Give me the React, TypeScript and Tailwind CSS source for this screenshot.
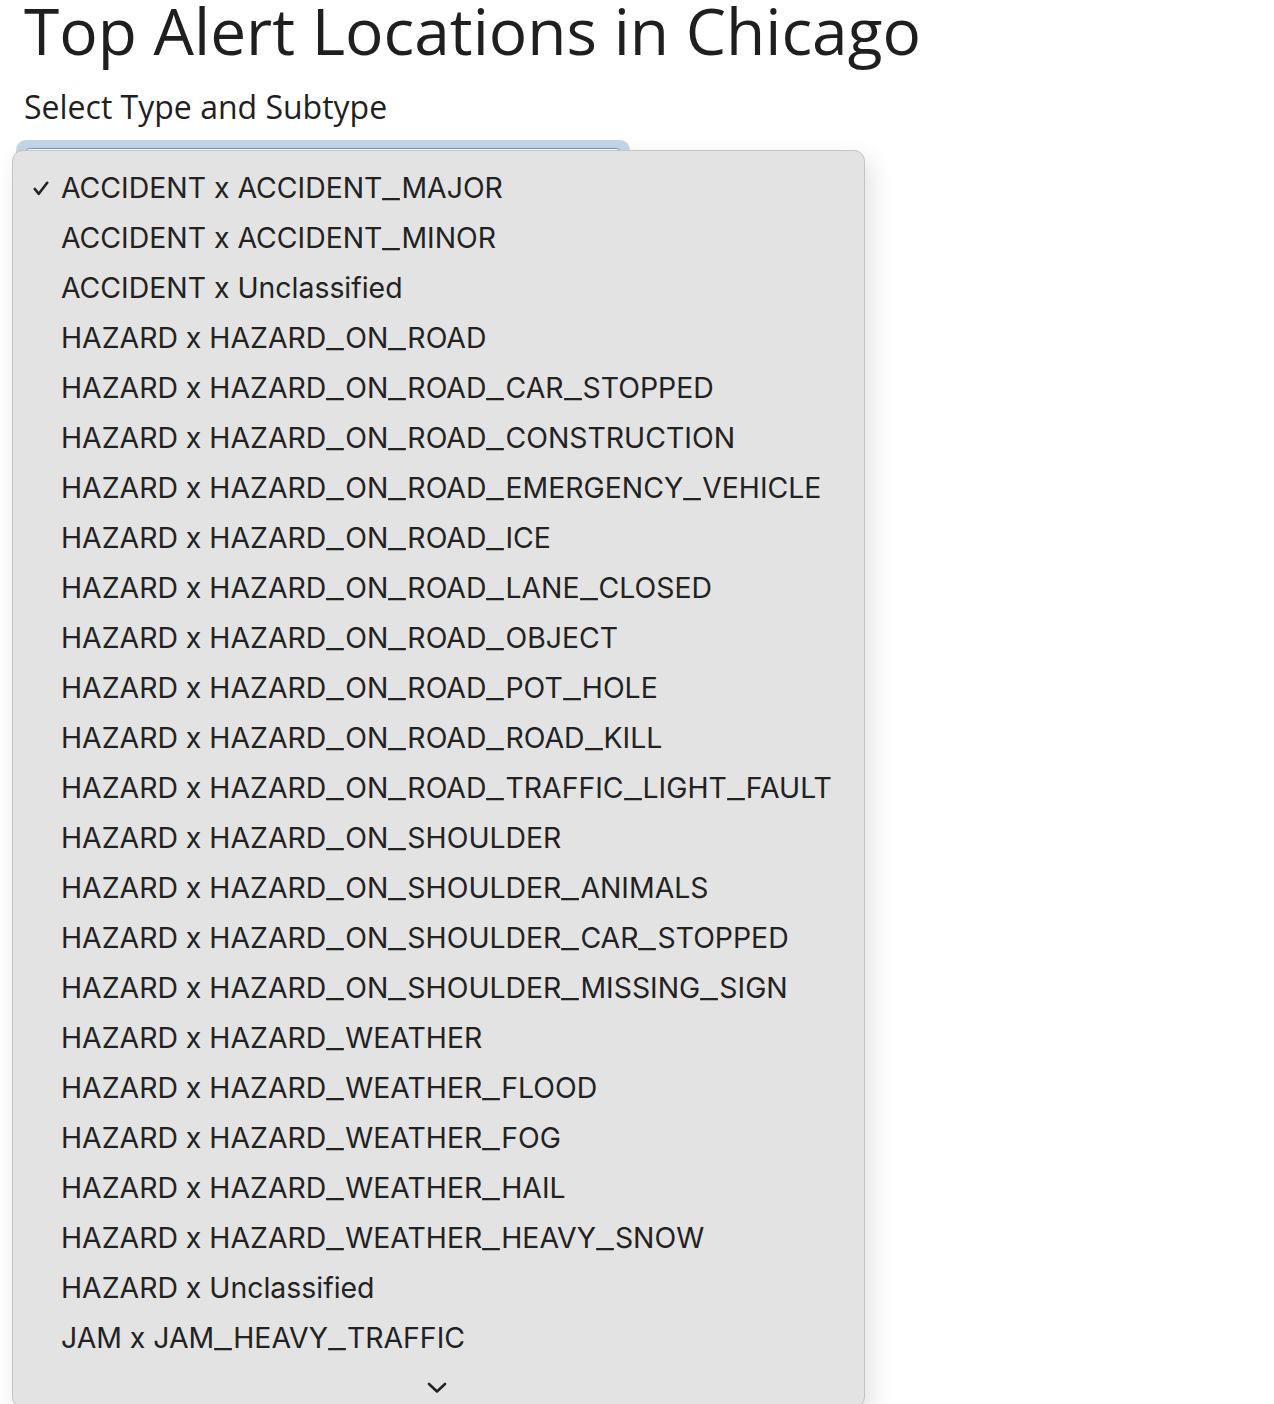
import React from 'react';

const options = [
    'ACCIDENT x ACCIDENT_MAJOR',
    'ACCIDENT x ACCIDENT_MINOR',
    'ACCIDENT x Unclassified',
    'HAZARD x HAZARD_ON_ROAD',
    'HAZARD x HAZARD_ON_ROAD_CAR_STOPPED',
    'HAZARD x HAZARD_ON_ROAD_CONSTRUCTION',
    'HAZARD x HAZARD_ON_ROAD_EMERGENCY_VEHICLE',
    'HAZARD x HAZARD_ON_ROAD_ICE',
    'HAZARD x HAZARD_ON_ROAD_LANE_CLOSED',
    'HAZARD x HAZARD_ON_ROAD_OBJECT',
    'HAZARD x HAZARD_ON_ROAD_POT_HOLE',
    'HAZARD x HAZARD_ON_ROAD_ROAD_KILL',
    'HAZARD x HAZARD_ON_ROAD_TRAFFIC_LIGHT_FAULT',
    'HAZARD x HAZARD_ON_SHOULDER',
    'HAZARD x HAZARD_ON_SHOULDER_ANIMALS',
    'HAZARD x HAZARD_ON_SHOULDER_CAR_STOPPED',
    'HAZARD x HAZARD_ON_SHOULDER_MISSING_SIGN',
    'HAZARD x HAZARD_WEATHER',
    'HAZARD x HAZARD_WEATHER_FLOOD',
    'HAZARD x HAZARD_WEATHER_FOG',
    'HAZARD x HAZARD_WEATHER_HAIL',
    'HAZARD x HAZARD_WEATHER_HEAVY_SNOW',
    'HAZARD x Unclassified',
    'JAM x JAM_HEAVY_TRAFFIC',
];

const CheckMark = () => (
    <svg width="16" height="15" viewBox="0 0 16 15" fill="none">
        <path d="M1.8 8 L5.8 12.8 L14.2 1.8" stroke="#222" strokeWidth="2.6" strokeLinecap="round" strokeLinejoin="round" />
    </svg>
);

const ChevronDown = () => (
    <svg width="20" height="12" viewBox="0 0 20 12" fill="none">
        <path d="M2 2 L10 9.5 L18 2" stroke="#222" strokeWidth="2.6" strokeLinecap="round" strokeLinejoin="round" />
    </svg>
);

// the system font draws a much wider underscore than Inter does
const OptionLabel = ({ text }: { text: string }) => {
    const parts = text.split('_');
    return (
        <span className="whitespace-nowrap">
            {parts.map((p, i) => (
                <React.Fragment key={i}>
                    {i > 0 && (
                        <span className="inline-block w-[19px]">
                            <span className="inline-block origin-left scale-x-[1.38]">_</span>
                        </span>
                    )}
                    {p}
                </React.Fragment>
            ))}
        </span>
    );
};

const OptionsMenu = ({ selected }: { selected: number }) => {
    return (
        <div className="absolute left-[-4px] top-[10px] w-[853px] h-[1258px] overflow-hidden rounded-[11px] border border-[#c4c4c4] bg-[#e2e3e2] shadow-[6px_10px_24px_rgba(0,0,0,0.12)] pt-[12px] font-['Inter',sans-serif] text-[#222] text-[28.4px]">
            {options.map((opt, i) => (
                <div key={opt} className="flex items-center h-[50px]">
                    <div className="w-[48px] flex justify-end pr-[12px]">
                        {i === selected && <CheckMark />}
                    </div>
                    <OptionLabel text={opt} />
                </div>
            ))}
            <div className="flex justify-center h-[40px] items-start pt-[19px] pr-[4px]">
                <ChevronDown />
            </div>
        </div>
    );
};

export default function App() {
    return (
        <div className="min-h-[1404px] bg-white px-6 font-['Open_Sans',sans-serif] text-[#1f1f1f] overflow-hidden">
            <h1 className="text-[64px] leading-none mt-[-1px]">Top Alert Locations in Chicago</h1>
            <div className="text-[32px] mt-[28px] leading-none">Select Type and Subtype</div>
            <div className="relative mt-[17px] ml-[-8px]">
                <div className="w-[614px] h-[60px] rounded-[10px] bg-[#c3d6e8] p-[8px]">
                    <div className="h-full rounded-[6px] border border-[#6d9bc6] bg-white" />
                </div>
                <OptionsMenu selected={0} />
            </div>
        </div>
    );
}
